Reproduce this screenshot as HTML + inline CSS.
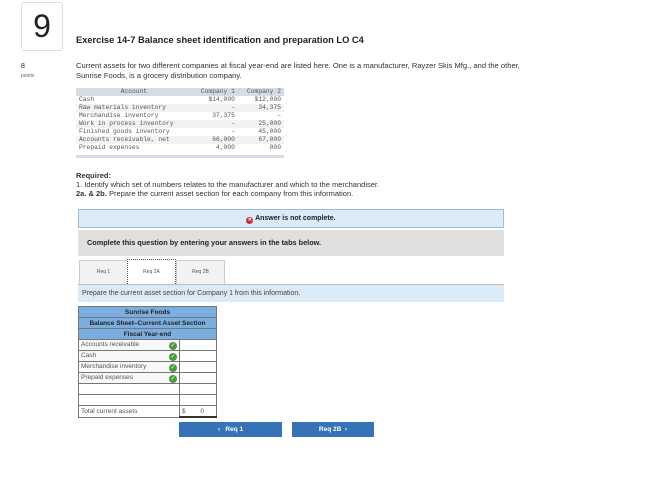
<!DOCTYPE html><html><head><style>
body{margin:0;width:658px;height:481px;background:#fff;font-family:"Liberation Sans",sans-serif;position:relative;overflow:hidden;color:#222}
.a{position:absolute}
.mono{font-family:"Liberation Mono",monospace;font-size:6.3px;color:#555}
table{border-collapse:collapse}
.dt td{padding:0 3px;height:8px;line-height:8px}
.bs td{border:1px solid #777;height:10px;padding:0 2px;font-size:6.5px;color:#555}
.bs .h{background:#7aaee0;text-align:center;color:#222;font-weight:bold;font-size:6.5px}
.ck{display:inline-block;width:8px;height:8px;border-radius:50%;background:#4a9a3c;float:right;margin-top:1px;color:#fff;font-size:6px;line-height:8px;text-align:center}
.btn{background:#3572b8;color:#fff;font-size:6.5px;font-weight:bold;text-align:center;line-height:15px;height:15px}
</style></head><body>
<div class="a" style="left:21px;top:2px;width:40px;height:47px;border:1px solid #ddd;border-radius:3px;font-size:32px;text-align:center;line-height:47px">9</div>
<div class="a" style="left:76px;top:35px;font-size:9.3px;font-weight:bold;color:#222">Exercise 14-7 Balance sheet identification and preparation LO C4</div>
<div class="a" style="left:21px;top:63px;font-size:7px">8</div>
<div class="a" style="left:21px;top:73px;font-size:5px;color:#666">points</div>
<div class="a" style="left:76px;top:61px;font-size:7.6px;line-height:9.5px;color:#333;white-space:nowrap">Current assets for two different companies at fiscal year-end are listed here. One is a manufacturer, Rayzer Skis Mfg., and the other,<br>Sunrise Foods, is a grocery distribution company.</div>
<div class="a" style="left:76px;top:88px;width:208px">
<table class="dt mono" style="width:208px">
<tr style="background:#d6dbe6"><td style="text-align:center">Account</td><td style="text-align:right">Company 1</td><td style="text-align:right">Company 2</td></tr>
<tr><td>Cash</td><td align=right>$14,000</td><td align=right>$12,000</td></tr>
<tr style="background:#f2f2f2"><td>Raw materials inventory</td><td align=right>–</td><td align=right>34,375</td></tr>
<tr><td>Merchandise inventory</td><td align=right>37,375</td><td align=right>–</td></tr>
<tr style="background:#f2f2f2"><td>Work in process inventory</td><td align=right>–</td><td align=right>25,000</td></tr>
<tr><td>Finished goods inventory</td><td align=right>–</td><td align=right>45,000</td></tr>
<tr style="background:#f2f2f2"><td>Accounts receivable, net</td><td align=right>66,000</td><td align=right>67,000</td></tr>
<tr><td>Prepaid expenses</td><td align=right>4,000</td><td align=right>800</td></tr>
</table>
<div style="height:3px;background:#d6dbe6;margin-top:3px"></div></div>
<div class="a" style="left:76px;top:171px;font-size:7.5px;line-height:9px;color:#333;white-space:nowrap"><b>Required:</b><br>1. Identify which set of numbers relates to the manufacturer and which to the merchandiser.<br><b>2a. &amp; 2b.</b> Prepare the current asset section for each company from this information.</div>
<div class="a" style="left:78px;top:209px;width:424px;height:17px;background:#dbeaf7;border:1px solid #9cbedd;text-align:center;font-size:7px;font-weight:bold;line-height:17px"><span style="display:inline-block;width:7px;height:7px;border-radius:50%;background:#c9302c;color:#fff;font-size:5px;line-height:7px;vertical-align:-1px">✕</span> Answer is not complete.</div>
<div class="a" style="left:78px;top:230px;width:426px;height:26px;background:#e0e0e0;font-size:7.3px;font-weight:bold;line-height:26px;text-indent:9px">Complete this question by entering your answers in the tabs below.</div>
<div class="a" style="left:79px;top:260px;width:47px;height:23px;border:1px solid #ccc;background:#f2f2f2;font-size:5px;text-align:center;line-height:23px;color:#555">Req 1</div>
<div class="a" style="left:127px;top:259px;width:47px;height:25px;border:1px dotted #555;background:#fff;font-size:5px;text-align:center;line-height:25px;color:#555">Req 2A</div>
<div class="a" style="left:176px;top:260px;width:47px;height:23px;border:1px solid #ccc;background:#f2f2f2;font-size:5px;text-align:center;line-height:23px;color:#555">Req 2B</div>
<div class="a" style="left:78px;top:284px;width:426px;height:17px;background:#dbeaf7;border-top:1px solid #bbb;font-size:7px;line-height:17px;text-indent:4px;color:#444">Prepare the current asset section for Company 1 from this information.</div>
<table class="a bs" style="left:78px;top:306px;width:139px">
<tr><td colspan=2 class="h">Sunrise Foods</td></tr>
<tr><td colspan=2 class="h">Balance Sheet–Current Asset Section</td></tr>
<tr><td colspan=2 class="h">Fiscal Year-end</td></tr>
<tr><td style="width:96px;background:#f6f8fa">Accounts receivable<span class="ck">✓</span></td><td></td></tr>
<tr><td style="background:#f6f8fa">Cash<span class="ck">✓</span></td><td></td></tr>
<tr><td style="background:#f6f8fa">Merchandise inventory<span class="ck">✓</span></td><td></td></tr>
<tr><td style="background:#f6f8fa">Prepaid expenses<span class="ck">✓</span></td><td></td></tr>
<tr><td></td><td></td></tr><tr><td></td><td></td></tr>
<tr><td>Total current assets</td><td style="border-bottom:2px solid #333">$<span style="float:right;margin-right:10px">0</span></td></tr>
</table>
<div class="a btn" style="left:179px;top:422px;width:103px">&lsaquo;&nbsp;&nbsp; Req 1</div>
<div class="a btn" style="left:292px;top:422px;width:82px">Req 2B &nbsp;&rsaquo;</div>
</body></html>
